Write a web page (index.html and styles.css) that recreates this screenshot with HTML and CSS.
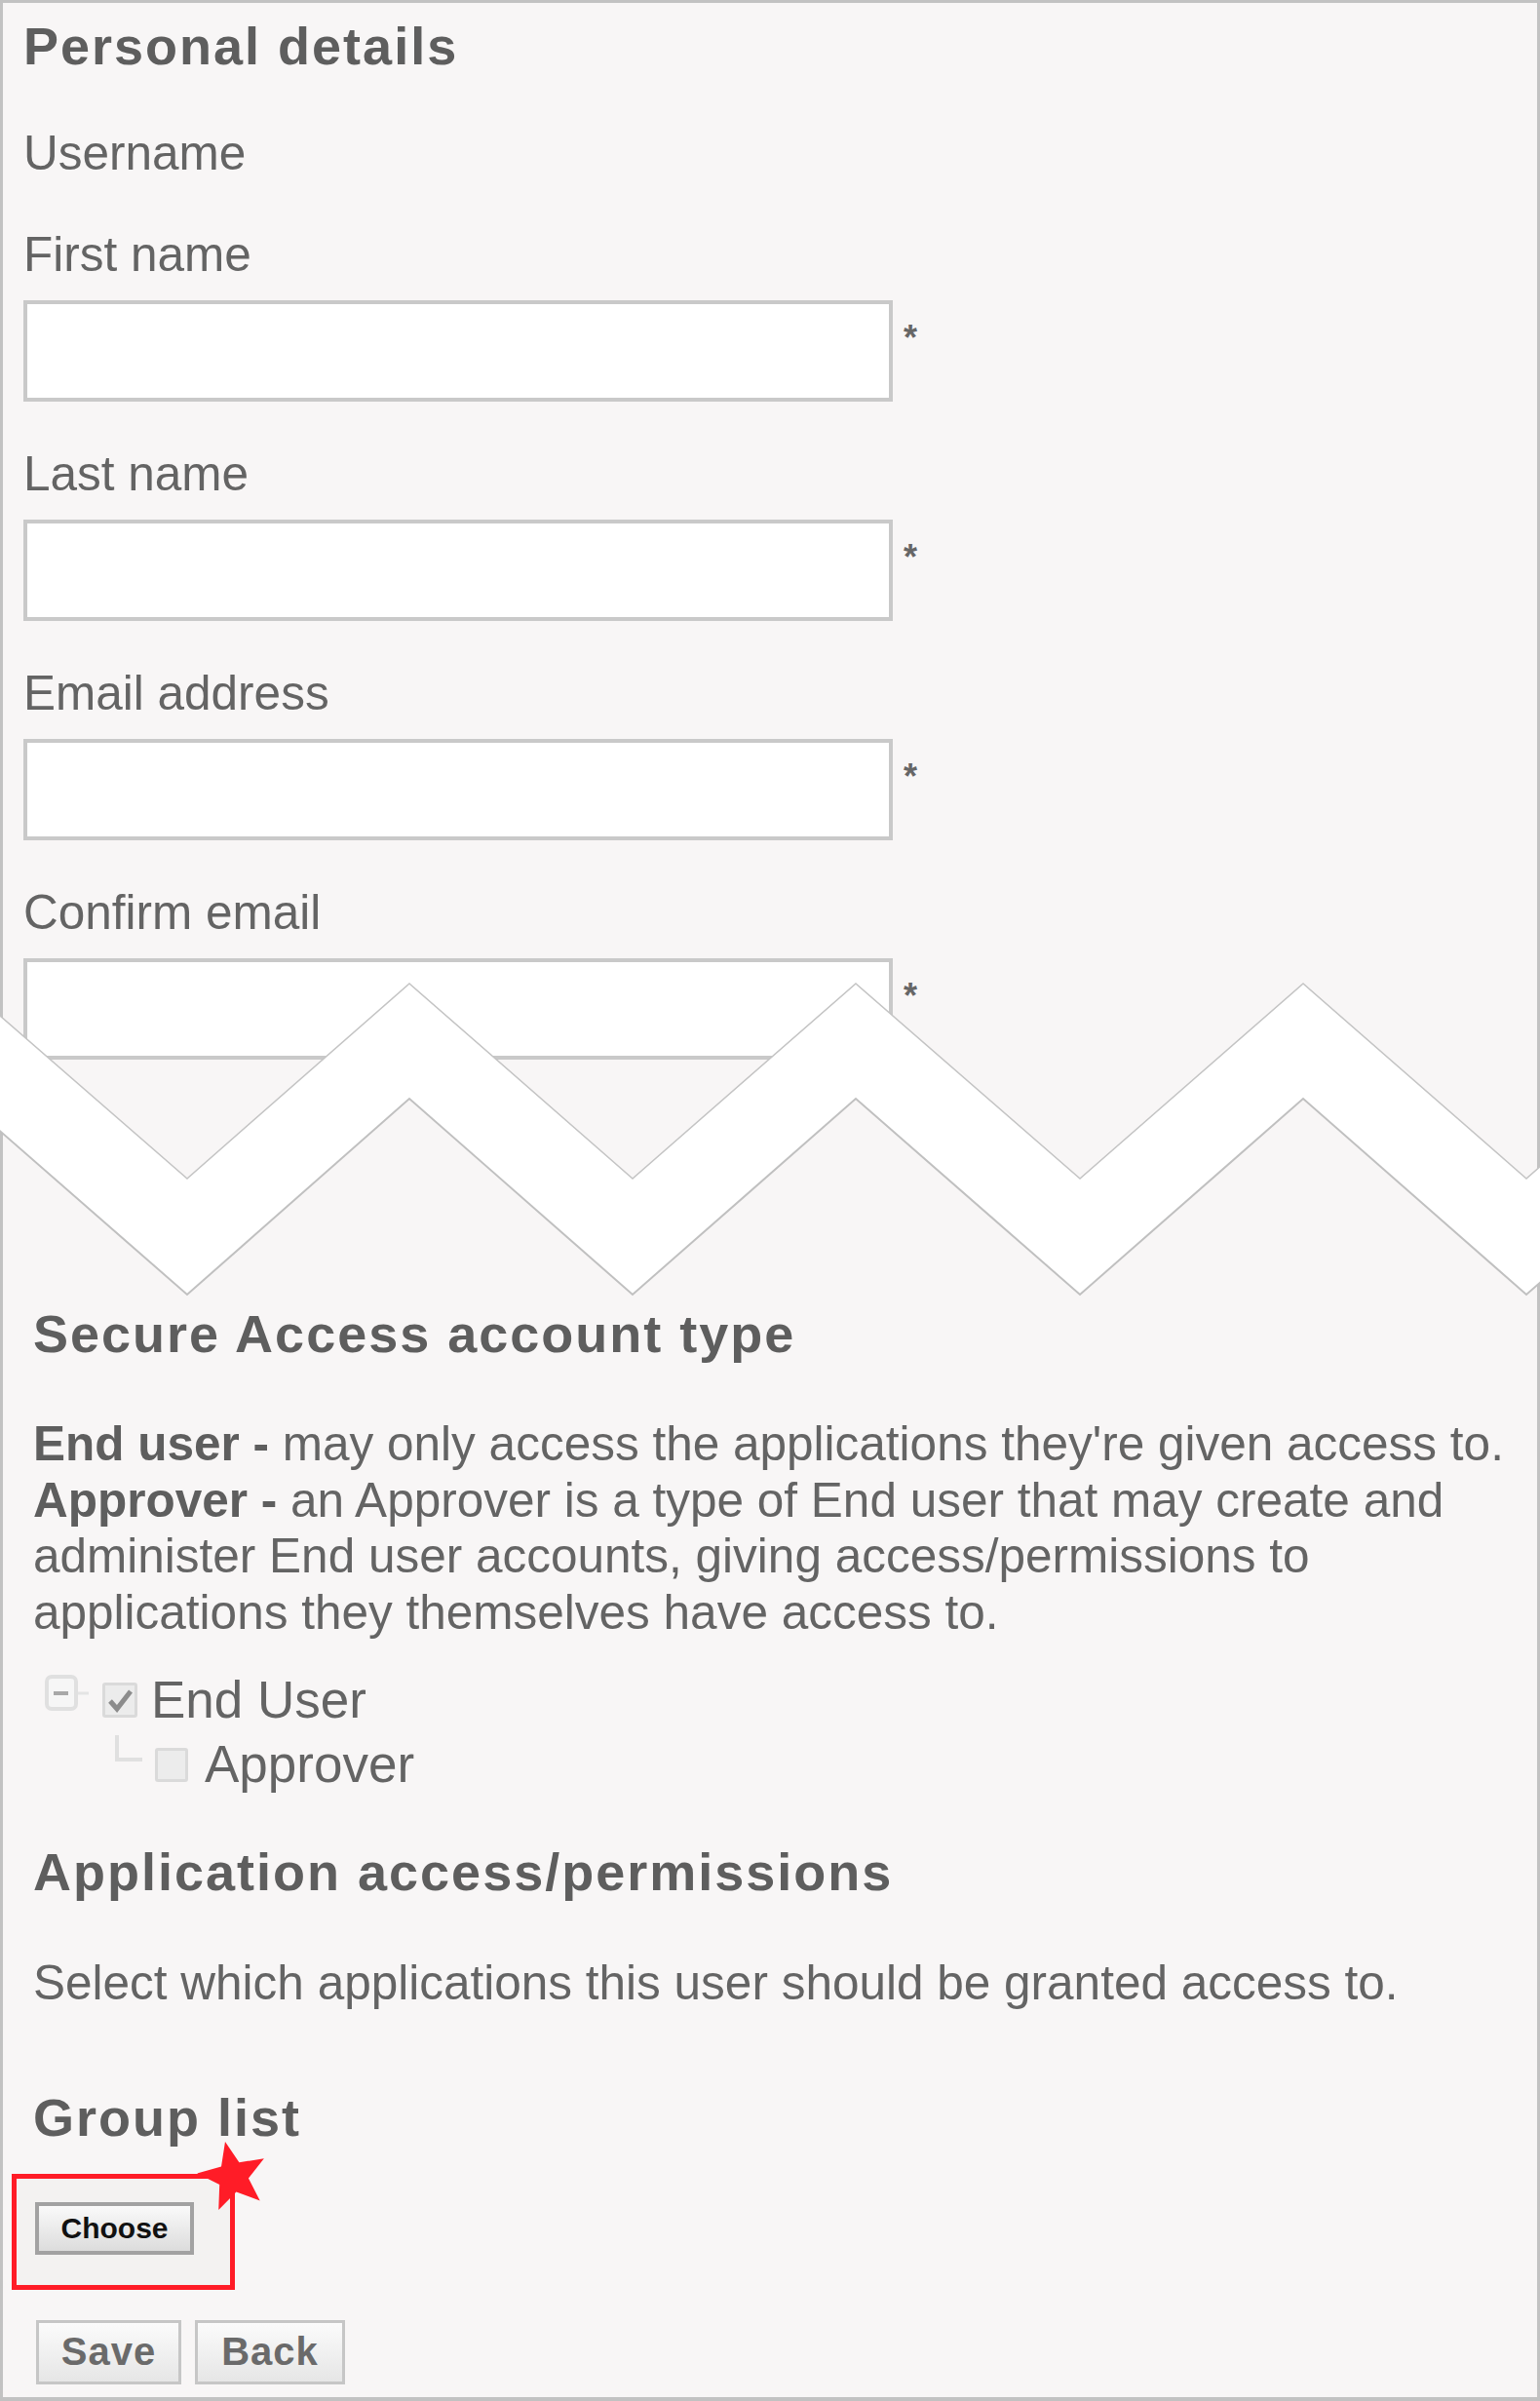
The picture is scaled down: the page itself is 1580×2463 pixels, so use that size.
FILE: index.html
```html
<!DOCTYPE html>
<html lang="en">
<head>
    <meta charset="UTF-8">
    <meta name="viewport" content="width=device-width, initial-scale=1.0">
    <title>Secure Access - New user</title>
    <link rel="stylesheet" href="styles.css">
</head>
<body>

<div class="page">

    <section class="personal">
        <h2 class="section-title">Personal details</h2>

        <div class="field field-first">
            <span class="field-label">Username</span>
        </div>

        <div class="field">
            <label class="field-label" for="firstName">First name</label>
            <div class="input-row">
                <input type="text" id="firstName" name="firstName">
                <span class="req">*</span>
            </div>
        </div>

        <div class="field">
            <label class="field-label" for="lastName">Last name</label>
            <div class="input-row">
                <input type="text" id="lastName" name="lastName">
                <span class="req">*</span>
            </div>
        </div>

        <div class="field">
            <label class="field-label" for="email">Email address</label>
            <div class="input-row">
                <input type="text" id="email" name="email">
                <span class="req">*</span>
            </div>
        </div>

        <div class="field">
            <label class="field-label" for="confirmEmail">Confirm email</label>
            <div class="input-row">
                <input type="text" id="confirmEmail" name="confirmEmail">
                <span class="req">*</span>
            </div>
        </div>
    </section>

    <!-- torn page between the two captures -->
    <div class="tear">
        <svg width="1580" height="326" viewBox="0 0 1580 326">
            <polygon fill="#ffffff" points="-38,4 192,204 420,4 649,204 878,4 1108,204 1337,4 1566,204 1795,4 1795,122 1566,323 1337,122 1108,323 878,122 649,323 420,122 192,323 -38,122"/>
            <polyline fill="none" stroke="#c4c4c4" stroke-width="1.5" points="-38,4 192,204 420,4 649,204 878,4 1108,204 1337,4 1566,204 1795,4"/>
            <polyline fill="none" stroke="#c0c0c0" stroke-width="2" points="-38,122 192,323 420,122 649,323 878,122 1108,323 1337,122 1566,323 1795,122"/>
        </svg>
    </div>

    <section class="account">
        <h2 class="section-title">Secure Access account type</h2>

        <p class="text intro"><strong>End user -</strong> may only access the applications they're given access to.<br><strong>Approver -</strong> an Approver is a type of End user that may create and administer End user accounts, giving access/permissions to applications they themselves have access to.</p>

        <ul class="tree">
            <li>
                <div class="tree-row">
                    <svg class="expander" width="45" height="38" viewBox="0 0 45 38">
                        <rect x="2" y="2" width="30" height="33" rx="5" fill="#f6f6f6" stroke="#e0e0e0" stroke-width="4"/>
                        <line x1="9" y1="19" x2="24" y2="19" stroke="#a8a8a8" stroke-width="4"/>
                        <line x1="34" y1="19" x2="45" y2="19" stroke="#e4e4e4" stroke-width="3"/>
                    </svg>
                    <span class="check is-checked">
                        <svg width="30" height="30" viewBox="0 0 30 30">
                            <path d="M5 16 L12 24 L26 6" fill="none" stroke="#8c8c8c" stroke-width="5"/>
                        </svg>
                    </span>
                    <span class="tree-label">End User</span>
                </div>
                <ul class="tree-children">
                    <li class="tree-row">
                        <svg class="elbow" width="29" height="30" viewBox="0 0 29 30">
                            <path d="M3 0 V25 H29" fill="none" stroke="#e0e0e0" stroke-width="4"/>
                        </svg>
                        <span class="check"></span>
                        <span class="tree-label child-label">Approver</span>
                    </li>
                </ul>
            </li>
        </ul>

        <h2 class="section-title apps-title">Application access/permissions</h2>

        <p class="text apps-text">Select which applications this user should be granted access to.</p>

        <h2 class="section-title group-title">Group list</h2>

        <div class="highlight">
            <button type="button" class="btn-choose">Choose</button>
            <svg class="star" width="80" height="80" viewBox="0 0 80 80">
                <polygon fill="#ff1c27" points="31.99,3.88 46.38,25.33 71.88,21.22 55.93,41.53 67.71,64.52 43.46,55.62 25.25,73.93 26.21,48.12 3.17,36.46 28.02,29.40"/>
            </svg>
        </div>

        <div class="actions">
            <button type="button" class="btn btn-save">Save</button>
            <button type="button" class="btn btn-back">Back</button>
        </div>
    </section>

</div>

</body>
</html>
```

FILE: styles.css
```css
* {
    box-sizing: border-box;
}

body {
    margin: 0;
    background: #fff;
    font-family: "Liberation Sans", Arial, sans-serif;
    color: #646464;
}

.page {
    width: 1580px;
    height: 2463px;
    border: 3px solid #c2c2c2;
    border-bottom-width: 4px;
    background: #f8f6f6;
}

/* headings */
.section-title {
    margin: 0;
    font-size: 54px;
    line-height: 60px;
    font-weight: bold;
    letter-spacing: 2px;
    color: #5e5e5e;
}

/* personal details */
.personal {
    padding: 14px 0 0 21px;
}

.field {
    margin-top: 44px;
}

.field-first {
    margin-top: 50px;
}

.field-label {
    display: block;
    font-size: 49.5px;
    line-height: 60px;
    margin-bottom: 17px;
}

.input-row {
    display: flex;
    align-items: flex-start;
}

.input-row input {
    display: block;
    width: 892px;
    height: 104px;
    margin: 0;
    padding: 0 12px;
    border: 4px solid #c9c9c9;
    border-radius: 0;
    background: #fff;
    font-size: 40px;
    outline: none;
}

.req {
    margin: 22px 0 0 11px;
    font-size: 36px;
    line-height: 34px;
    font-weight: bold;
    color: #666;
}

/* torn edge */
.tear {
    position: relative;
    z-index: 1;
    width: 1580px;
    height: 326px;
    margin: -82px -3px 0;
}

.tear svg {
    display: block;
}

/* account type */
.account {
    padding: 7px 20px 0 31px;
}

.text {
    margin: 0;
    font-size: 49.5px;
    line-height: 57.5px;
}

.text strong {
    color: #5e5e5e;
}

.intro {
    margin-top: 54px;
}

.tree,
.tree-children {
    list-style: none;
    margin: 0;
    padding: 0;
}

.tree {
    margin-top: 29px;
}

.tree-row {
    display: flex;
    align-items: center;
    height: 66px;
}

.expander {
    margin: 0 0 14px 12px;
}

.check {
    display: flex;
    align-items: center;
    justify-content: center;
    width: 34px;
    height: 35px;
    margin-left: 13px;
    border: 3px solid #dadada;
    border-radius: 3px;
    background: #ececec;
}

.check.is-checked {
    width: 36px;
    height: 36px;
    margin-left: 14px;
}

.tree-label {
    margin-left: 14px;
    font-size: 53px;
    line-height: 66px;
}

.elbow {
    align-self: flex-start;
    margin: 3px 0 0 83px;
}

.child-label {
    margin-left: 17px;
}

.apps-title {
    margin-top: 47px;
}

.apps-text {
    margin-top: 55px;
}

.group-title {
    margin-top: 79px;
}

/* highlighted Choose button */
.highlight {
    position: relative;
    width: 229px;
    height: 119px;
    margin: 28px 0 0 -22px;
    padding: 24px 0 0 19px;
    border: 5px solid #ff1c27;
    background: #f3f2f1;
}

.star {
    position: absolute;
    left: 182px;
    top: -42px;
}

.btn-choose {
    display: block;
    width: 163px;
    height: 54px;
    padding: 0;
    border: 4px solid #a2a2a2;
    border-radius: 0;
    background: linear-gradient(#fafafa, #dcdcdc);
    font-family: "Liberation Sans", Arial, sans-serif;
    font-size: 30px;
    font-weight: bold;
    color: #111;
    cursor: pointer;
}

.actions {
    display: flex;
    gap: 14px;
    margin-top: 31px;
}

.btn {
    height: 66px;
    padding: 0;
    border: 3px solid #c6c6c6;
    border-radius: 0;
    background: linear-gradient(#fbfbfb, #e6e6e6);
    font-family: "Liberation Sans", Arial, sans-serif;
    font-size: 40px;
    font-weight: bold;
    letter-spacing: 1px;
    color: #6a6a6a;
    cursor: pointer;
}

.btn-save {
    width: 149px;
    margin-left: 3px;
}

.btn-back {
    width: 154px;
}
```
